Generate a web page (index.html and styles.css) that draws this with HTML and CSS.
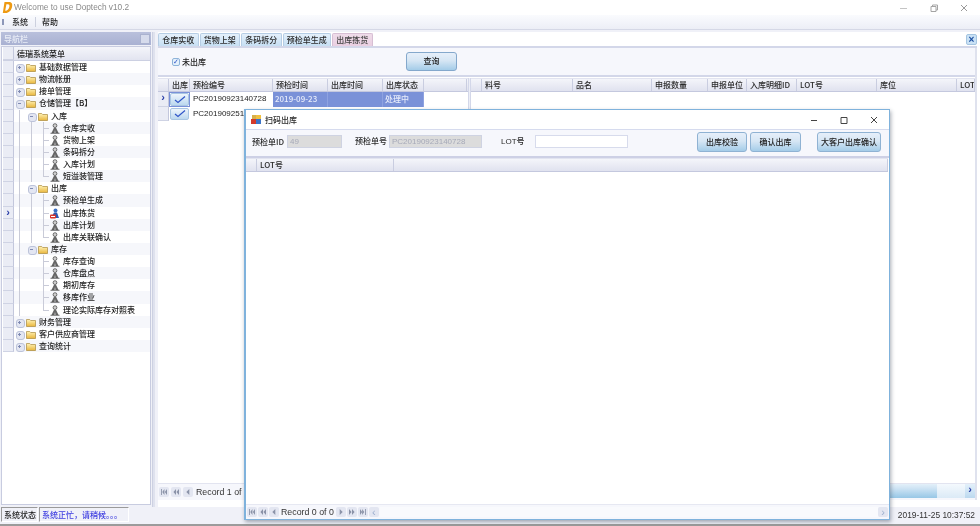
FILE: index.html
```html
<!DOCTYPE html>
<html lang="zh">
<head>
<meta charset="utf-8">
<title>Welcome to use Doptech v10.2</title>
<link rel="stylesheet" href="styles.css">
</head>
<body>
<svg class="defs" width="0" height="0" aria-hidden="true">
  <defs>
    <linearGradient id="fg" x1="0" y1="0" x2="0" y2="1"><stop offset="0" stop-color="#fff3b8"/><stop offset="1" stop-color="#e9b63c"/></linearGradient>
    <symbol id="folder" viewBox="0 0 10 9"><path d="M.5 1.500h3.200l1 1h4.800v6h-9z" fill="url(#fg)" stroke="#a98a3c" stroke-width=".7"/></symbol>
    <symbol id="user" viewBox="0 0 10 11"><circle cx="5" cy="2.600" r="1.900" fill="#d0d0d0" stroke="#3d3d3d" stroke-width=".7"/><path d="M4 4.800 1.500 10h3L5 7l.5 3h3L6 4.800z" fill="#666"/><path d="M.5 10.300h9" stroke="#333" stroke-width=".7"/></symbol>
    <symbol id="nav-first" viewBox="0 0 9 7"><path d="M1 0h1v7H1zM5 0v7L2.500 3.500zM8 0v7L5.500 3.500z" fill="#8b93a8"/></symbol>
    <symbol id="nav-prev2" viewBox="0 0 9 7"><path d="M4.500 0v7L1.500 3.500zM8 0v7L5 3.500z" fill="#8b93a8"/></symbol>
    <symbol id="nav-prev" viewBox="0 0 9 7"><path d="M6 0v7L2.500 3.500z" fill="#8b93a8"/></symbol>
    <symbol id="nav-next" viewBox="0 0 9 7"><path d="M3 0v7l3.500-3.500z" fill="#8b93a8"/></symbol>
    <symbol id="nav-next2" viewBox="0 0 9 7"><path d="M1 0v7l3-3.500zM4.500 0v7l3-3.500z" fill="#8b93a8"/></symbol>
    <symbol id="nav-last" viewBox="0 0 9 7"><path d="M1 0v7l2.500-3.500zM3.500 0v7L6 3.500zM7 0h1v7H7z" fill="#8b93a8"/></symbol>
    <symbol id="tick" viewBox="0 0 14 9"><path d="M2 5l3 2.500L12 1.500" fill="none" stroke="#2f55c8" stroke-width="1.200"/></symbol>
  </defs>
</svg>
<div class="app">
  <header class="titlebar">
    <svg class="logo" width="11" height="13" viewBox="0 0 11 13"><path d="M2.500 1h4.200c3 0 4 2 3.400 4.700C9.400 9.500 6.800 12 3.500 12H.8zM4.400 3.300 3.200 9.700c2.500 0 3.700-1.700 4.200-4 .3-1.600-.3-2.400-1.500-2.400z" fill="#ee9a12"/></svg>
    <span class="title-text">Welcome to use Doptech v10.2</span>
    <div class="win-ctrls">
      <svg width="10" height="10" viewBox="0 0 10 10"><path d="M1 5.500h7" stroke="#c4c4c4"/></svg>
      <svg width="10" height="10" viewBox="0 0 10 10"><path d="M2 3.500h5v5H2zM3.500 3.500V2h5v5H7" fill="none" stroke="#a4a4a4"/></svg>
      <svg width="10" height="10" viewBox="0 0 10 10"><path d="M2 2l6 6M8 2l-6 6" stroke="#999"/></svg>
    </div>
  </header>
  <nav class="menubar">
    <span class="grip"></span>
    <span class="menu-item">系统</span>
    <span class="menu-sep"></span>
    <span class="menu-item">帮助</span>
  </nav>
  <main class="workspace">
    <aside class="sidebar">
      <div class="side-head"><span>导航栏</span><span class="pin"></span></div>
      <div class="tree">
        <div class="tree-head"><span class="rh"></span><span class="tree-title">德瑞系统菜单</span></div>
        <div class="tr"><span class="rh"></span><span class="c e p"></span><svg class="fo"><use href="#folder"/></svg><span class="t">基础数据管理</span></div>
        <div class="tr"><span class="rh"></span><span class="c e p"></span><svg class="fo"><use href="#folder"/></svg><span class="t">物流帐册</span></div>
        <div class="tr"><span class="rh"></span><span class="c e p"></span><svg class="fo"><use href="#folder"/></svg><span class="t">接单管理</span></div>
        <div class="tr"><span class="rh"></span><span class="c e m"></span><svg class="fo"><use href="#folder"/></svg><span class="t">仓储管理【B】</span></div>
        <div class="tr"><span class="rh"></span><span class="c g"></span><span class="c e m"></span><svg class="fo"><use href="#folder"/></svg><span class="t">入库</span></div>
        <div class="tr"><span class="rh"></span><span class="c g"></span><span class="c g"></span><span class="c b"></span><svg class="us"><use href="#user"/></svg><span class="t">仓库实收</span></div>
        <div class="tr"><span class="rh"></span><span class="c g"></span><span class="c g"></span><span class="c b"></span><svg class="us"><use href="#user"/></svg><span class="t">货物上架</span></div>
        <div class="tr"><span class="rh"></span><span class="c g"></span><span class="c g"></span><span class="c b"></span><svg class="us"><use href="#user"/></svg><span class="t">条码拆分</span></div>
        <div class="tr"><span class="rh"></span><span class="c g"></span><span class="c g"></span><span class="c b"></span><svg class="us"><use href="#user"/></svg><span class="t">入库计划</span></div>
        <div class="tr"><span class="rh"></span><span class="c g"></span><span class="c g"></span><span class="c l"></span><svg class="us"><use href="#user"/></svg><span class="t">短溢装管理</span></div>
        <div class="tr"><span class="rh"></span><span class="c g"></span><span class="c e m"></span><svg class="fo"><use href="#folder"/></svg><span class="t">出库</span></div>
        <div class="tr"><span class="rh"></span><span class="c g"></span><span class="c g"></span><span class="c b"></span><svg class="us"><use href="#user"/></svg><span class="t">预检单生成</span></div>
        <div class="tr"><span class="rh cur">›</span><span class="c g"></span><span class="c g"></span><span class="c b"></span><svg class="us" viewBox="0 0 10 11"><circle cx="5.500" cy="2.600" r="2" fill="#3b6fc4"/><path d="M4 4.500 1 10h8L7 4.500z" fill="#2d58b0"/><rect x="0" y="6.500" width="6" height="4" rx="1" fill="#d8342a"/><path d="M1 8.500h4" stroke="#fff"/></svg><span class="t">出库拣货</span></div>
        <div class="tr"><span class="rh"></span><span class="c g"></span><span class="c g"></span><span class="c b"></span><svg class="us"><use href="#user"/></svg><span class="t">出库计划</span></div>
        <div class="tr"><span class="rh"></span><span class="c g"></span><span class="c g"></span><span class="c l"></span><svg class="us"><use href="#user"/></svg><span class="t">出库关联确认</span></div>
        <div class="tr"><span class="rh"></span><span class="c g"></span><span class="c e m"></span><svg class="fo"><use href="#folder"/></svg><span class="t">库存</span></div>
        <div class="tr"><span class="rh"></span><span class="c g"></span><span class="c"></span><span class="c b"></span><svg class="us"><use href="#user"/></svg><span class="t">库存查询</span></div>
        <div class="tr"><span class="rh"></span><span class="c g"></span><span class="c"></span><span class="c b"></span><svg class="us"><use href="#user"/></svg><span class="t">仓库盘点</span></div>
        <div class="tr"><span class="rh"></span><span class="c g"></span><span class="c"></span><span class="c b"></span><svg class="us"><use href="#user"/></svg><span class="t">期初库存</span></div>
        <div class="tr"><span class="rh"></span><span class="c g"></span><span class="c"></span><span class="c b"></span><svg class="us"><use href="#user"/></svg><span class="t">移库作业</span></div>
        <div class="tr"><span class="rh"></span><span class="c g"></span><span class="c"></span><span class="c l"></span><svg class="us"><use href="#user"/></svg><span class="t">理论实际库存对照表</span></div>
        <div class="tr"><span class="rh"></span><span class="c e p"></span><svg class="fo"><use href="#folder"/></svg><span class="t">财务管理</span></div>
        <div class="tr"><span class="rh"></span><span class="c e p"></span><svg class="fo"><use href="#folder"/></svg><span class="t">客户供应商管理</span></div>
        <div class="tr"><span class="rh"></span><span class="c e p"></span><svg class="fo"><use href="#folder"/></svg><span class="t">查询统计</span></div>
      </div>
    </aside>
    <div class="splitter"></div>
    <section class="content">
      <div class="tabs">
        <span class="tab">仓库实收</span>
        <span class="tab">货物上架</span>
        <span class="tab">条码拆分</span>
        <span class="tab">预检单生成</span>
        <span class="tab active">出库拣货</span>
        <span class="tab-close">×</span>
      </div>
      <div class="panel">
        <div class="filter">
          <label class="chk"><span class="box">✓</span>未出库</label>
          <button class="btn query">查询</button>
        </div>
        <div class="grids">
          <div class="grid grid-left">
            <div class="ghead">
              <span class="hc w11"></span><span class="hc w21">出库</span><span class="hc w83">预检编号</span><span class="hc w55">预检时间</span><span class="hc w55">出库时间</span><span class="hc w41">出库状态</span><span class="hc w43"></span>
            </div>
            <div class="grow">
              <span class="rhc cur">›</span><span class="cell w21 tickc on"><span class="tick"><svg width="14" height="9"><use href="#tick"/></svg></span></span><span class="cell w83">PC20190923140728</span><span class="cell w55 sel">2019-09-23</span><span class="cell w55 sel"></span><span class="cell w41 sel">处理中</span>
            </div>
            <div class="grow">
              <span class="rhc"></span><span class="cell w21 tickc"><span class="tick"><svg width="14" height="9"><use href="#tick"/></svg></span></span><span class="cell w83">PC20190925100915</span>
            </div>
          </div>
          <div class="grid-split"></div>
          <div class="grid grid-right">
            <div class="ghead">
              <span class="hc w11"></span><span class="hc w91">料号</span><span class="hc w79">品名</span><span class="hc w56">申报数量</span><span class="hc w39">申报单位</span><span class="hc w50">入库明细ID</span><span class="hc w80">LOT号</span><span class="hc w80">库位</span><span class="hc wrest">LOT</span>
            </div>
          </div>
        </div>
        <div class="foot">
          <div class="pager">
            <span class="nb"><svg><use href="#nav-first"/></svg></span><span class="nb"><svg><use href="#nav-prev2"/></svg></span><span class="nb"><svg><use href="#nav-prev"/></svg></span>
            <span class="rec">Record 1 of 2</span>
          </div>
          <div class="hscroll"><span class="sthumb"></span><span class="sbtn">›</span></div>
        </div>
      </div>
    </section>
  </main>
  <footer class="statusbar">
    <span class="st-label">系统状态</span>
    <span class="st-msg">系统正忙，请稍候。。。</span>
    <span class="st-time">2019-11-25 10:37:52</span>
  </footer>

  <div class="dialog">
    <div class="dlg-title">
      <svg width="11" height="11" viewBox="0 0 11 11"><rect x="1" y="1" width="5" height="5" fill="#d8b04a"/><rect x="5" y="1" width="5" height="5" fill="#f0c040"/><rect x="0" y="5" width="5" height="5" fill="#d43a2a"/><rect x="5" y="5" width="5" height="5" fill="#3c74c8"/></svg>
      <span>扫码出库</span>
      <div class="dlg-ctrls">
        <svg width="10" height="10" viewBox="0 0 10 10"><path d="M2 5.500h6" stroke="#444"/></svg>
        <svg width="10" height="10" viewBox="0 0 10 10"><path d="M2 2.500h6v6H2z" fill="none" stroke="#444"/></svg>
        <svg width="10" height="10" viewBox="0 0 10 10"><path d="M2 2l6 6M8 2l-6 6" stroke="#444"/></svg>
      </div>
    </div>
    <div class="dlg-tools">
      <span class="lb l1">预检单ID</span><span class="inp dis i1">49</span>
      <span class="lb l2">预检单号</span><span class="inp dis i2">PC20190923140728</span>
      <span class="lb l3">LOT号</span><span class="inp i3"></span>
      <button class="btn b1">出库校验</button><button class="btn b2">确认出库</button><button class="btn b3">大客户出库确认</button>
    </div>
    <div class="ghead dlg-head">
      <span class="hc w11"></span><span class="hc w137">LOT号</span><span class="hc wfill"></span>
    </div>
    <div class="dlg-body"></div>
    <div class="dlg-foot">
      <span class="nb"><svg><use href="#nav-first"/></svg></span><span class="nb"><svg><use href="#nav-prev2"/></svg></span><span class="nb"><svg><use href="#nav-prev"/></svg></span>
      <span class="rec">Record 0 of 0</span>
      <span class="nb"><svg><use href="#nav-next"/></svg></span><span class="nb"><svg><use href="#nav-next2"/></svg></span><span class="nb"><svg><use href="#nav-last"/></svg></span>
      <span class="nb sl">‹</span>
      <span class="dscroll"></span>
      <span class="nb sl">›</span>
    </div>
  </div>
</div>
</body>
</html>
```
FILE: styles.css
```css
* { box-sizing: border-box; }
html, body { margin: 0; padding: 0; }
body { width: 980px; height: 526px; overflow: hidden; background: #fff; }
.defs { position: absolute; }
.app {
  position: relative; width: 980px; height: 526px; overflow: hidden;
  display: flex; flex-direction: column;
  background: #f0f1f8; color: #1c1c1c;
  font: 500 8px/12px "Noto Sans CJK SC", "Liberation Sans", sans-serif;
  filter: blur(.35px);
}
.titlebar { height: 15px; flex: none; background: #fff; display: flex; align-items: center; padding-left: 2px; }
.logo { margin-right: 1px; }
.title-text { font: 8.300px/15px "Liberation Sans", sans-serif; color: #8a8a8a; }
.win-ctrls { margin-left: auto; display: flex; gap: 20px; padding-right: 11px; }
.menubar { height: 15px; flex: none; display: flex; align-items: center; background: linear-gradient(#fafbfe, #eceef6); border-bottom: 1px solid #d5d8e6; }
.grip { width: 2px; height: 6px; margin: 0 8px 0 2px; background: #8d97b8; }
.menu-item { color: #1c1c1c; }
.menu-sep { width: 1px; height: 10px; background: #ccd0de; margin: 0 6px 0 7px; }
.workspace { flex: 1; min-height: 0; display: flex; padding-top: 2px; }

.sidebar { width: 152px; flex: none; display: flex; flex-direction: column; padding: 0 1px 0 1px; }
.side-head { height: 13px; flex: none; background: linear-gradient(#b9c0dc, #a9b1d2); color: #e8ecf6; display: flex; align-items: center; justify-content: space-between; padding: 0 1px 0 3px; margin-bottom: 1px; }
.pin { width: 10px; height: 10px; background: #d6dbec; border: 1px solid #aab2cf; }
.tree { flex: 1; background: #fff; border: 1px solid #c8cce0; padding-left: 1px; margin-bottom: 2px; }
.tree-head { height: 14px; display: flex; align-items: stretch; background: linear-gradient(#f4f5fa, #e2e4f0); border-bottom: 1px solid #ccd0e2; }
.tree-title { padding-left: 3px; line-height: 13px; }
.rh { width: 11px; flex: none; background: #eaecf5; border-right: 1px solid #c3c7dc; border-bottom: 1px solid #cfd3e4; text-align: center; }
.rh.cur { color: #2b3fa8; font: 700 11px/10px "Liberation Sans", sans-serif; }
.tr { height: 12.125px; display: flex; align-items: stretch; }
.tr:nth-child(odd) { background: #f6f7fb; }
.c { width: 12px; flex: none; position: relative; }
.c::before, .c::after { content: ""; position: absolute; }
.g::before, .b::before { left: 5px; top: 0; bottom: 0; border-left: 1px solid #c9cbd8; }
.l::before { left: 5px; top: 0; height: 6px; border-left: 1px solid #c9cbd8; }
.b::after, .l::after { left: 5px; top: 6px; width: 6px; border-top: 1px solid #c9cbd8; }
.e::before { left: 2px; top: 3px; width: 7px; height: 7px; background: #e3e6f2; border: 1px solid #bcc3da; border-radius: 3px; }
.e::after { left: 4px; top: 5px; width: 3px; height: 3px; }
.p::after { background: linear-gradient(#7f8ab2, #7f8ab2) center / 3px 1px no-repeat, linear-gradient(#7f8ab2, #7f8ab2) center / 1px 3px no-repeat; }
.m::after { background: linear-gradient(#7f8ab2, #7f8ab2) center / 3px 1px no-repeat; }
.fo { width: 10px; height: 9px; margin: 2px 3px 0 0; flex: none; }
.us { width: 10px; height: 11px; margin: 1px 3px 0 0; flex: none; }
.t { line-height: 12px; white-space: nowrap; }

.splitter { width: 3px; flex: none; background: #dfe2ee; border-left: 1px solid #cdd1e2; margin-right: 3px; }
.content { flex: 1; min-width: 0; display: flex; flex-direction: column; padding: 0 3px 7px 0; background: #fff; }
.tabs { height: 16px; flex: none; display: flex; gap: 1px; align-items: flex-end; padding-top: 2px; border-bottom: 2px solid #d3d7e9; }
.tab { height: 13px; line-height: 12px; padding: 0 3.250px; background: linear-gradient(#e4f0fb, #c6dff3); border: 1px solid #b6cde4; border-bottom: 0; border-radius: 2px 2px 0 0; color: #2a2a2a; white-space: nowrap; }
.tab.active { background: linear-gradient(#efdcea, #e9cfe1); border-color: #d7bfd4; color: #444; }
.tab-close { width: 11px; height: 11px; margin: 0 0 1px auto; background: #c9e1f5; border: 1px solid #a5c5e1; color: #1c4fa0; font: 700 10px/9px "Liberation Sans", sans-serif; text-align: center; border-radius: 2px; }
.panel { flex: 1; min-height: 0; display: flex; flex-direction: column; border-right: 2px solid #dfe2ee; }
.filter { height: 29px; flex: none; background: #f6f7fc; display: flex; align-items: center; padding: 0 0 0 14px; border-bottom: 2px solid #d3d7e9; }
.chk { display: flex; align-items: center; gap: 2px; margin-top: 1px; }
.box { width: 8px; height: 8px; border: 1px solid #8fb4d9; border-radius: 2px; background: #e5f1fb; color: #2f55c8; font: 700 7px/6px "DejaVu Sans", sans-serif; text-align: center; }
.btn { font: 500 8px/12px "Noto Sans CJK SC", sans-serif; color: #1c1c1c; padding: 0; border: 1px solid #8fb2d3; border-radius: 3px; background: linear-gradient(#e6effa, #d6e6f4 45%, #a4cce8); }
.query { width: 51px; height: 19px; margin-left: 200px; margin-top: -1px; border-width: 1.500px; border-color: #84a8cc; }
.grids { flex: 1; min-height: 0; display: flex; padding-top: 1px; }
.grid-left { width: 310px; flex: none; }
.grid-split { width: 3px; flex: none; background: #eceef6; border-left: 1px solid #d3d7e9; border-right: 1px solid #d3d7e9; }
.grid-right { flex: 1; min-width: 0; overflow: hidden; }
.ghead { height: 14px; display: flex; background: linear-gradient(#f4f5fa, #e0e2ef); border-bottom: 1px solid #c4c8de; border-top: 1px solid #e2e4f0; }
.hc { flex: none; line-height: 12px; padding-left: 3px; border-right: 1px solid #c9cde0; color: #2a2a2a; white-space: nowrap; overflow: hidden; }
.w11 { width: 11px; } .w21 { width: 21px; } .w83 { width: 83px; } .w55 { width: 55px; } .w56 { width: 56px; }
.w41 { width: 41px; } .w43 { width: 43px; } .w91 { width: 91px; } .w79 { width: 79px; } .w39 { width: 39px; }
.w50 { width: 50px; } .w80 { width: 80px; } .w137 { width: 137px; } .wrest { width: 18px; } .wfill { flex: 1; }
.grow { height: 14.500px; display: flex; }
.rhc { width: 11px; flex: none; background: #eaecf5; border-right: 1px solid #c3c7dc; border-bottom: 1px solid #cfd3e4; text-align: center; color: #2b3fa8; font: 700 11px/11px "Liberation Sans", sans-serif; }
.cell { flex: none; padding-left: 3px; line-height: 14px; white-space: nowrap; overflow: hidden; font-family: "Liberation Sans", "Noto Sans CJK SC", sans-serif; }
.cell.sel { background: #7a91d8; color: #e6ebfa; border-right: 1px solid #8ea2e0; padding-left: 2px; font-family: "Noto Sans CJK SC", sans-serif; }
.tickc { padding: 1px; }
.tickc.on { outline: 1px solid #7a91d8; outline-offset: -1px; }
.tick { display: flex; height: 100%; align-items: center; justify-content: center; background: linear-gradient(#eef5fc, #bcd8ef); border: 1px solid #a9c6e3; border-radius: 2px; }
.foot { height: 17px; flex: none; display: flex; border-top: 1px solid #e2e4f0; justify-content: space-between; align-items: flex-start; background: #f6f7fc; }
.pager { display: flex; gap: 1px; padding: 2px 0 0 1px; align-items: center; }
.nb { width: 10px; height: 10px; display: flex; align-items: center; justify-content: center; background: #e3e6f1; border-radius: 2px; color: #8b93a8; font: 9px/9px "Liberation Sans", sans-serif; margin-right: 1px; }
.nb svg { width: 8px; height: 6px; }
.rec { font: 8.800px/12px "Liberation Sans", sans-serif; color: #333; margin: 0 2px 0 1px; white-space: nowrap; }
.hscroll { width: 110px; height: 14px; display: flex; background: linear-gradient(#e3f0f9, #cfe4f4 30%, #97c7e6); align-items: stretch; justify-content: flex-end; }
.sthumb { width: 28px; background: linear-gradient(#f4f9fd, #dbeaf6); }
.sbtn { width: 10px; background: linear-gradient(#e3f0fa, #bcd9ef); color: #2b3fa8; font: 700 11px/11px "Liberation Sans", sans-serif; text-align: center; }

.statusbar { height: 19px; flex: none; display: flex; align-items: center; padding: 0 5px 2px 1px; background: #f0f1f8; border-bottom: 2px solid #9b9b9b; }
.st-label { width: 37px; height: 15px; line-height: 13px; padding-left: 2px; border: 1px solid #9a9a9a; border-right-color: #fff; border-bottom-color: #fff; white-space: nowrap; }
.st-msg { width: 90px; height: 15px; line-height: 13px; padding-left: 2px; margin-left: 1px; border: 1px solid #9a9a9a; border-right-color: #fff; border-bottom-color: #fff; color: #3c3ce0; white-space: nowrap; font-family: "Noto Sans CJK TC", sans-serif; }
.st-time { margin-left: auto; font: 8.400px/14px "Liberation Sans", sans-serif; color: #333; }

.dialog {
  position: absolute; left: 244px; top: 109px; width: 646px; height: 411px;
  display: flex; flex-direction: column; background: #fff;
  border: 2px solid #7fb2dc; border-top-width: 1px; border-bottom-width: 1px; border-right-width: 1px;
  box-shadow: 1px 2px 4px rgba(60, 70, 90, .45);
}
.dlg-title { height: 20px; flex: none; display: flex; align-items: center; gap: 3px; padding-left: 5px; background: #fff; border-bottom: 1px solid #d6dbee; color: #2a2a2a; }
.dlg-ctrls { margin-left: auto; display: flex; gap: 20px; padding-right: 10px; }
.dlg-tools { height: 28px; flex: none; display: flex; align-items: center; background: #f6f7fc; border-bottom: 2px solid #cdd0e5; padding: 0 0 2px 6px; }
.lb { color: #2a2a2a; white-space: nowrap; }
.l1 { width: 35px; }
.l2 { width: 34px; margin-left: 13px; margin-top: -2px; }
.l3 { width: 34px; margin-left: 19px; font-family: "Liberation Sans", "Noto Sans CJK SC", sans-serif; }
.inp { height: 13px; margin-top: -1px; border: 1px solid #d7dbec; background: #fff; line-height: 11px; padding-left: 2px; font-family: "Liberation Sans", sans-serif; color: #a6a9b8; }
.dis { background: #dcdcdc; border-color: #cfd3e2; }
.i1 { width: 55px; }
.i2 { width: 93px; }
.i3 { width: 93px; }
.dlg-tools .btn { height: 20px; }
.b1 { width: 50px; margin-left: 69px; }
.b2 { width: 51px; margin-left: 3px; }
.b3 { width: 64px; margin-left: 16px; }
.dlg-head { margin: 0 1px 0 0; flex: none; }
.dlg-body { flex: 1; background: #fff; }
.dlg-foot { height: 15px; flex: none; display: flex; align-items: center; background: #f6f7fc; padding-left: 1px; border-top: 1px solid #e6e8f2; }
.dscroll { flex: 1; height: 10px; background: #f9fafd; }
.sl { color: #9db0cf; font-size: 11px; }
```
